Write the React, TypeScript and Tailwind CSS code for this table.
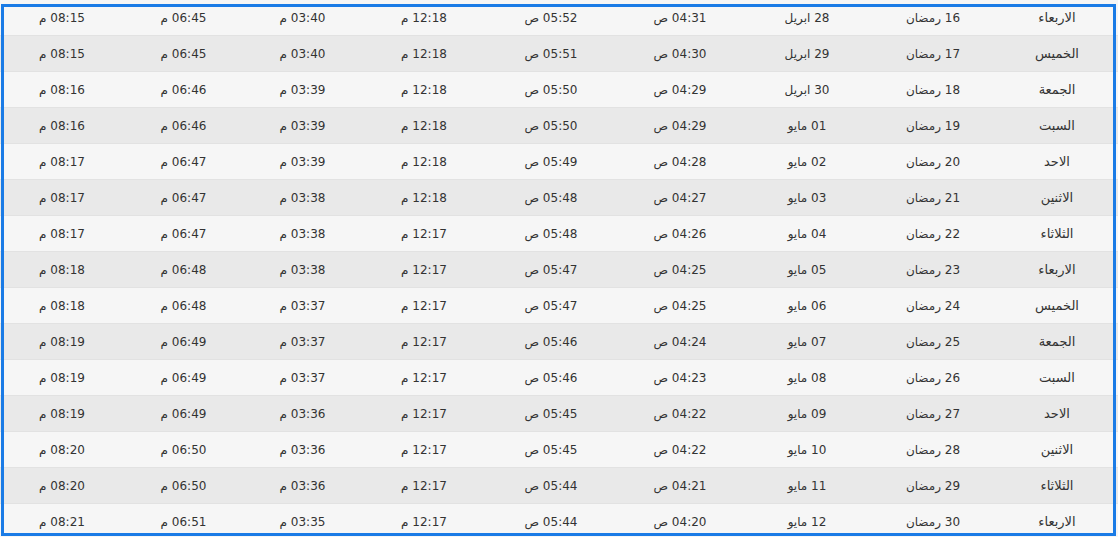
const rows: string[][] = [
  ['الاربعاء', '16', '28 ابريل', '04:31', '05:52', '12:18', '03:40', '06:45', '08:15'],
  ['الخميس', '17', '29 ابريل', '04:30', '05:51', '12:18', '03:40', '06:45', '08:15'],
  ['الجمعة', '18', '30 ابريل', '04:29', '05:50', '12:18', '03:39', '06:46', '08:16'],
  ['السبت', '19', '01 مايو', '04:29', '05:50', '12:18', '03:39', '06:46', '08:16'],
  ['الاحد', '20', '02 مايو', '04:28', '05:49', '12:18', '03:39', '06:47', '08:17'],
  ['الاثنين', '21', '03 مايو', '04:27', '05:48', '12:18', '03:38', '06:47', '08:17'],
  ['الثلاثاء', '22', '04 مايو', '04:26', '05:48', '12:17', '03:38', '06:47', '08:17'],
  ['الاربعاء', '23', '05 مايو', '04:25', '05:47', '12:17', '03:38', '06:48', '08:18'],
  ['الخميس', '24', '06 مايو', '04:25', '05:47', '12:17', '03:37', '06:48', '08:18'],
  ['الجمعة', '25', '07 مايو', '04:24', '05:46', '12:17', '03:37', '06:49', '08:19'],
  ['السبت', '26', '08 مايو', '04:23', '05:46', '12:17', '03:37', '06:49', '08:19'],
  ['الاحد', '27', '09 مايو', '04:22', '05:45', '12:17', '03:36', '06:49', '08:19'],
  ['الاثنين', '28', '10 مايو', '04:22', '05:45', '12:17', '03:36', '06:50', '08:20'],
  ['الثلاثاء', '29', '11 مايو', '04:21', '05:44', '12:17', '03:36', '06:50', '08:20'],
  ['الاربعاء', '30', '12 مايو', '04:20', '05:44', '12:17', '03:35', '06:51', '08:21'],
]

export default function App() {
  return (
    <div className="relative h-[537px] w-[1118px] overflow-hidden bg-[#f6f6f6] font-['DejaVu_Sans',sans-serif] text-[12px] text-[#333]">
      <div dir="rtl">
        {rows.map((r, i) => (
          <div
            key={i}
            className={`grid h-[36px] grid-cols-[122px_126px_126px_128px_130px_124px_119px_119px_124px] items-center border-b border-[#e2e2e2] text-center ${
              i % 2 === 0 ? 'bg-[#f6f6f6]' : 'bg-[#e9e9e9]'
            }`}
          >
            <div className="text-[13px]">{r[0]}</div>
            <div>{r[1]} رمضان</div>
            <div>{r[2]}</div>
            <div>{r[3]} ص</div>
            <div>{r[4]} ص</div>
            <div>{r[5]} م</div>
            <div>{r[6]} م</div>
            <div>{r[7]} م</div>
            <div>{r[8]} م</div>
          </div>
        ))}
      </div>
      {/* highlight frame drawn over the table */}
      <div className="pointer-events-none absolute left-[1px] top-[4px] h-[532px] w-[1115px] border-[3px] border-[#1a7be6]" />
    </div>
  )
}
